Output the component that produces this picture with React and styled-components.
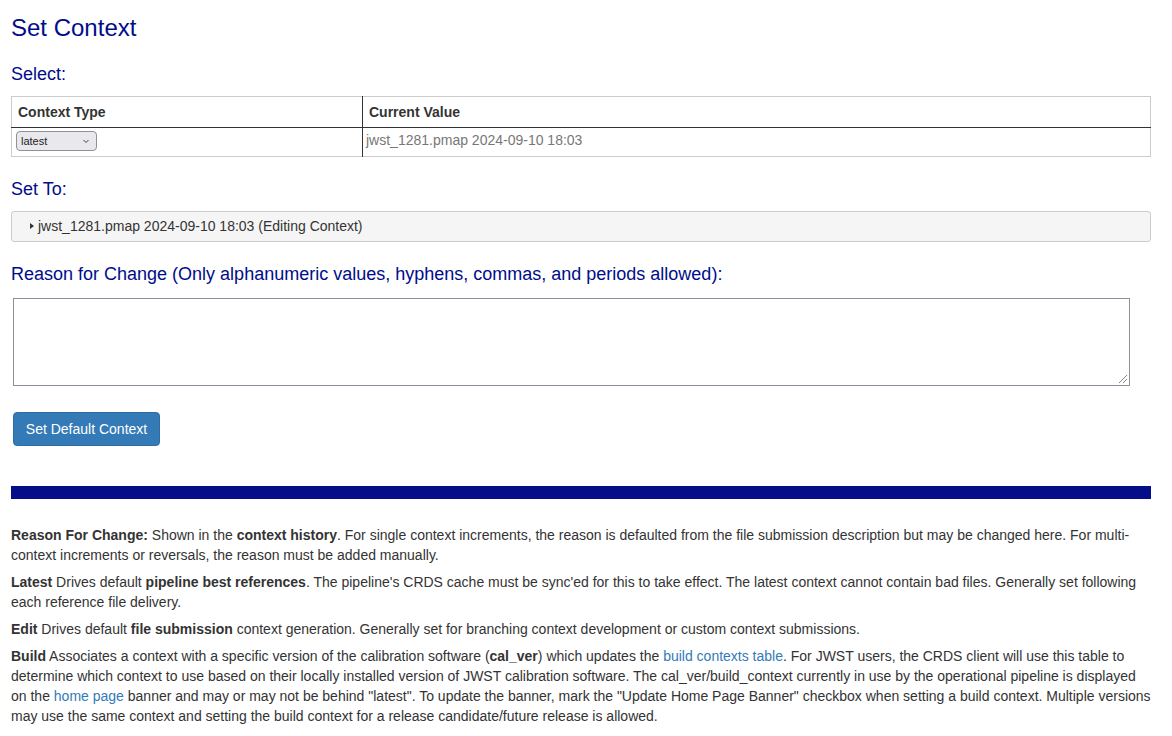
import styled, { createGlobalStyle } from "styled-components";

const GlobalStyle = createGlobalStyle`
  body {
    margin: 0;
    background: #fff;
    font-family: "Liberation Sans", Arial, sans-serif;
    color: #333;
  }
`;

function App() {
  return (
    <Page>
      <GlobalStyle />
      <Title>Set Context</Title>

      <Heading>Select:</Heading>
      <Table>
        <colgroup>
          <col width="351" />
          <col />
        </colgroup>
        <thead>
          <tr>
            <Th>Context Type</Th>
            <Th $divided>Current Value</Th>
          </tr>
        </thead>
        <tbody>
          <tr>
            <Td>
              <SelectBox>
                <span>latest</span>
                <Chevron viewBox="0 0 8 8">
                  <path d="M1.5 3 L4 5.5 L6.5 3" />
                </Chevron>
              </SelectBox>
            </Td>
            <Td $divided $muted>jwst_1281.pmap 2024-09-10 18:03</Td>
          </tr>
        </tbody>
      </Table>

      <Heading $top={21}>Set To:</Heading>
      <Details>
        <Arrow />
        jwst_1281.pmap 2024-09-10 18:03 (Editing Context)
      </Details>

      <Heading $top={21}>
        Reason for Change (Only alphanumeric values, hyphens, commas, and periods allowed):
      </Heading>
      <TextArea />

      <Button>Set Default Context</Button>

      <Bar />

      <Help>
        <p>
          <b>Reason For Change:</b> Shown in the <b>context history</b>. For single context
          increments, the reason is defaulted from the file submission description but may be
          changed here. For multi-context increments or reversals, the reason must be added
          manually.
        </p>
        <p>
          <b>Latest</b> Drives default <b>pipeline best references</b>. The pipeline's CRDS
          cache must be sync'ed for this to take effect. The latest context cannot contain bad
          files. Generally set following each reference file delivery.
        </p>
        <p>
          <b>Edit</b> Drives default <b>file submission</b> context generation. Generally set
          for branching context development or custom context submissions.
        </p>
        <p>
          <b>Build</b> Associates a context with a specific version of the calibration software
          (<b>cal_ver</b>) which updates the <a href="#">build contexts table</a>. For JWST
          users, the CRDS client will use this table to determine which context to use based on
          their locally installed version of JWST calibration software. The
          cal_ver/build_context currently in use by the operational pipeline is displayed on
          the <a href="#">home page</a> banner and may or may not be behind "latest". To update
          the banner, mark the "Update Home Page Banner" checkbox when setting a build context.
          Multiple versions may use the same context and setting the build context for a
          release candidate/future release is allowed.
        </p>
      </Help>
    </Page>
  );
}

export default App;

const navy = "#000c8c";

const Page = styled.div`
  padding: 13px 21px 20px 11px;
  width: 1140px;
`;

const Title = styled.h1`
  margin: 0;
  font-size: 24px;
  font-weight: 400;
  line-height: 30px;
  color: ${navy};
`;

const Heading = styled.h3`
  margin: ${(p) => p.$top ?? 20}px 0 11px;
  font-size: 18px;
  font-weight: 400;
  line-height: 22px;
  color: ${navy};
`;

const Table = styled.table`
  width: 1140px;
  table-layout: fixed;
  border-collapse: collapse;
  border: 1px solid #ccc;
  font-size: 14px;
`;

const Th = styled.th`
  height: 30px;
  padding: 0 6px;
  text-align: left;
  font-weight: 700;
  color: #333;
  border-bottom: 1px solid #333;
  border-left: ${(p) => (p.$divided ? "1px solid #333" : "none")};
`;

const Td = styled.td`
  height: 29px;
  box-sizing: border-box;
  padding: ${(p) => (p.$muted ? "4px 3px 0" : "3px 4px 0")};
  color: ${(p) => (p.$muted ? "#777" : "#333")};
  border-left: ${(p) => (p.$divided ? "1px solid #333" : "none")};
  vertical-align: top;
  font-size: 14px;
  line-height: 16px;
`;

const SelectBox = styled.div`
  display: flex;
  align-items: center;
  justify-content: space-between;
  width: 81px;
  height: 20px;
  padding: 0 6px 0 4px;
  box-sizing: border-box;
  border: 1px solid #8f8f9d;
  border-radius: 4px;
  background: #e9e9ed;
  font-size: 11px;
  color: #222;
`;

const Chevron = styled.svg`
  width: 8px;
  height: 8px;
  fill: none;
  stroke: #444;
  stroke-width: 1;
`;

const Details = styled.div`
  display: flex;
  align-items: center;
  box-sizing: border-box;
  height: 31px;
  padding: 0 14px 2px;
  border: 1px solid #ccc;
  border-radius: 3px;
  background: #f5f5f5;
  font-size: 14px;
  color: #333;
`;

const Arrow = styled.span`
  width: 0;
  height: 0;
  margin: 0 4px 0 4px;
  border-top: 3.5px solid transparent;
  border-bottom: 3.5px solid transparent;
  border-left: 4px solid #333;
`;

const TextArea = styled.div`
  width: 1117px;
  height: 88px;
  margin: 13px 0 0 2px;
  box-sizing: border-box;
  border: 1px solid #8f8f9d;
  position: relative;
  &::after {
    content: "";
    position: absolute;
    right: 2px;
    bottom: 2px;
    width: 10px;
    height: 10px;
    background: repeating-linear-gradient(
      135deg,
      transparent 0 2px,
      #888 2px 3px
    );
    clip-path: polygon(100% 0, 100% 100%, 0 100%);
  }
`;

const Button = styled.button`
  display: block;
  margin: 26px 0 0 2px;
  width: 147px;
  height: 34px;
  border: 1px solid #2e6da4;
  border-radius: 4px;
  background: #337ab7;
  color: #fff;
  font-family: "Liberation Sans", Arial, sans-serif;
  font-size: 14px;
`;

const Bar = styled.div`
  height: 13px;
  margin-top: 40px;
  background: #050e88;
`;

const Help = styled.div`
  margin-top: 26px;
  font-size: 14px;
  line-height: 20px;
  color: #333;
  p {
    margin: 0 0 7px;
  }
  a {
    color: #337ab7;
    text-decoration: none;
  }
`;
